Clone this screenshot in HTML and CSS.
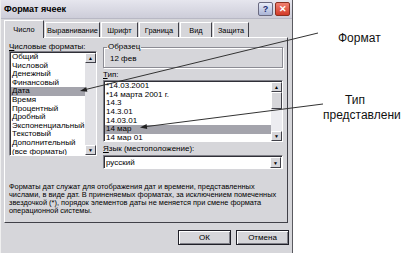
FILE: index.html
```html
<!DOCTYPE html>
<html lang="ru">
<head>
  <meta charset="UTF-8">
  <title>Формат ячеек</title>
  <link rel="stylesheet" href="styles.css">
</head>
<body>
  <div class="screen">
    <div class="dialog">
      <div class="titlebar">
        <span class="title">Формат ячеек</span>
        <span class="tbtn help">?</span>
        <span class="tbtn close">✕</span>
      </div>

      <div class="tabs">
        <div class="tab active" style="width:40px">Число</div>
        <div class="tab" style="width:55px">Выравнивание</div>
        <div class="tab" style="width:37px">Шрифт</div>
        <div class="tab" style="width:40px">Граница</div>
        <div class="tab" style="width:32px">Вид</div>
        <div class="tab" style="width:36px">Защита</div>
      </div>

      <div class="panel">
        <div class="panel-top">
          <!-- левая колонка -->
          <div class="col-left">
            <div class="label"><u>Ч</u>исловые форматы:</div>
            <div class="listbox formats">
              <div class="items">
                <div class="item">Общий</div>
                <div class="item">Числовой</div>
                <div class="item">Денежный</div>
                <div class="item">Финансовый</div>
                <div class="item selected">Дата</div>
                <div class="item">Время</div>
                <div class="item">Процентный</div>
                <div class="item">Дробный</div>
                <div class="item">Экспоненциальный</div>
                <div class="item">Текстовый</div>
                <div class="item">Дополнительный</div>
                <div class="item">(все форматы)</div>
              </div>
              <div class="scrollbar">
                <div class="sb-btn">▲</div>
                <div class="sb-track"><div class="sb-thumb full"></div></div>
                <div class="sb-btn">▼</div>
              </div>
            </div>
          </div>

          <!-- правая колонка -->
          <div class="col-right">
            <fieldset class="group">
              <legend>Образец</legend>
              <div class="sample">12 фев</div>
            </fieldset>
            <div class="label"><u>Т</u>ип:</div>
            <div class="listbox types">
              <div class="items">
                <div class="item">*14.03.2001</div>
                <div class="item">*14 марта 2001 г.</div>
                <div class="item">14.3</div>
                <div class="item">14.3.01</div>
                <div class="item">14.03.01</div>
                <div class="item selected">14 мар</div>
                <div class="item">14 мар 01</div>
              </div>
              <div class="scrollbar">
                <div class="sb-btn">▲</div>
                <div class="sb-track"><div class="sb-thumb"></div></div>
                <div class="sb-btn">▼</div>
              </div>
            </div>
            <div class="label lang"><u>Я</u>зык (местоположение):</div>
            <div class="combo">
              <span class="combo-text">русский</span>
              <span class="sb-btn combo-btn">▼</span>
            </div>
          </div>
        </div>

        <p class="desc">Форматы дат служат для отображения дат и времени, представленных<br>числами, в виде дат. В приненяемых форматах, за исключением помеченных<br>звездочкой (*), порядок элементов даты не меняется при смене формата<br>операционной системы.</p>
      </div>

      <div class="buttons">
        <button class="btn">ОК</button>
        <button class="btn">Отмена</button>
      </div>
    </div>

    <div class="notes">
      <div class="note note-format">Формат</div>
      <div class="note note-type">Тип</div>
      <div class="note note-view">представлени</div>
    </div>

    <!-- выноски со стрелками -->
    <svg class="callouts" width="408" height="253" viewBox="0 0 408 253">
      <line x1="318" y1="33" x2="86" y2="89.4" stroke="#333" stroke-width="1"/>
      <polygon points="80,91 87.4,91.8 86.2,86.9" fill="#222"/>
      <line x1="323" y1="104" x2="146" y2="126.6" stroke="#333" stroke-width="1"/>
      <polygon points="140,127.5 147.2,129.1 146.6,124.1" fill="#222"/>
    </svg>
  </div>
</body>
</html>
```

FILE: styles.css
```css
body {
  margin: 0;
  background: #fff;
  font-family: 'Liberation Sans', Arial, sans-serif;
  font-size: 8px;
  color: #000;
}
.screen {
  position: relative;
  display: flex;
  width: 408px;
  height: 253px;
  overflow: hidden;
}
.dialog {
  width: 293px;
  height: 253px;
  box-sizing: border-box;
  background: #d6d6da;
  border-left: 1px solid #f0f0f0;
  border-right: 1px solid #5a5a60;
  flex-shrink: 0;
}

/* заголовок окна */
.titlebar {
  height: 19px;
  display: flex;
  align-items: center;
  padding: 0 2px 0 3px;
  background: linear-gradient(to bottom, #e6e6ee, #cdcdd9);
  border-bottom: 1px solid #b8b8c4;
  box-sizing: border-box;
}
.title {
  font-weight: bold;
  font-size: 9px;
  flex: 1;
}
.tbtn {
  width: 13px;
  height: 12px;
  display: flex;
  justify-content: center;
  align-items: center;
  border: 1px solid #6a6a80;
  border-radius: 2px;
  font-weight: bold;
  font-size: 9px;
  margin-left: 2px;
}
.help {
  background: linear-gradient(to bottom, #e8ecf8, #aab4d6);
  color: #1c2a70;
}
.close {
  background: linear-gradient(to bottom, #f08070, #d23a28);
  color: #fff;
  border-color: #8a3020;
}

/* вкладки */
.tabs {
  display: flex;
  align-items: flex-end;
  height: 18px;
  padding-left: 3px;
  gap: 1px;
}
.tab {
  height: 15px;
  box-sizing: border-box;
  border-top: 1px solid #fff;
  border-left: 1px solid #fff;
  border-right: 1px solid #404048;
  display: flex;
  justify-content: center;
  align-items: center;
  white-space: nowrap;
  font-size: 7.4px;
}
.tab.active {
  height: 18px;
  margin-bottom: -1px;
  background: #d6d6da;
  position: relative;
  z-index: 1;
}

/* панель */
.panel {
  margin-left: 3px;
  width: 284px;
  height: 186px;
  box-sizing: border-box;
  border: 1px solid;
  border-color: #fff #404048 #404048 #fff;
  padding: 5px 4px 0 4px;
}
.panel-top {
  display: flex;
  gap: 6px;
}
.col-left {
  width: 88px;
}
.col-right {
  width: 180px;
}
.label {
  line-height: 8px;
  height: 8px;
  white-space: nowrap;
}
.listbox {
  display: flex;
  box-sizing: border-box;
  background: #fff;
  border: 1px solid;
  border-color: #808088 #fff #fff #808088;
  box-shadow: inset 1px 1px #303038;
  padding: 1px 0 0 1px;
  overflow: hidden;
}
.items {
  flex: 1;
  overflow: hidden;
}
.item {
  line-height: 8.6px;
  height: 8.6px;
  padding-left: 1px;
  white-space: nowrap;
}
.item.selected {
  background: #a4a4ac;
}
.formats {
  height: 105px;
}
.types {
  height: 62px;
  margin-top: 1px;
}
.types .item {
  line-height: 8.7px;
  height: 8.7px;
}

/* полосы прокрутки */
.scrollbar {
  width: 11px;
  display: flex;
  flex-direction: column;
  background: #ececf0;
}
.sb-btn {
  height: 10px;
  box-sizing: border-box;
  background: #d6d6da;
  border: 1px solid;
  border-color: #fff #404048 #404048 #fff;
  font-size: 5px;
  display: flex;
  justify-content: center;
  align-items: center;
}
.sb-track {
  flex: 1;
}
.sb-thumb {
  height: 17px;
  box-sizing: border-box;
  background: #d6d6da;
  border: 1px solid;
  border-color: #fff #404048 #404048 #fff;
}
.sb-thumb.full {
  height: 100%;
  background: #e2e2e6;
  border: none;
}

/* группа Образец */
.group {
  margin: 0;
  padding: 1px 6px 0 6px;
  height: 25px;
  box-sizing: border-box;
  border: 1px solid #8c8c94;
  box-shadow: 1px 1px #fff, inset 1px 1px #fff;
}
.group legend {
  padding: 0 1px;
  line-height: 8px;
  margin-left: -3px;
}
.sample {
  line-height: 9px;
  margin-top: 2px;
}
.col-right > .label {
  margin-top: 3px;
}
.combo {
  margin-top: 2px;
  height: 14px;
  box-sizing: border-box;
  display: flex;
  align-items: center;
  background: #fff;
  border: 1px solid;
  border-color: #808088 #fff #fff #808088;
  box-shadow: inset 1px 1px #303038;
  padding: 1px 1px 0 2px;
}
.combo-text {
  flex: 1;
}
.combo-btn {
  width: 11px;
  height: 11px;
}

.desc {
  margin: 14px 0 0 0;
  line-height: 8px;
  font-size: 7.4px;
  white-space: nowrap;
}

/* кнопки */
.buttons {
  display: flex;
  justify-content: flex-end;
  gap: 5px;
  padding: 7px 3px 0 0;
}
.btn {
  width: 53px;
  height: 15px;
  font-family: 'Liberation Sans', Arial, sans-serif;
  font-size: 8px;
  background: #d6d6da;
  border: 1px solid #202028;
  box-shadow: inset 1px 1px #fff, inset -1px -1px #808088;
  padding: 0;
  color: #000;
}

/* подписи справа */
.notes {
  display: flex;
  flex-direction: column;
  font-size: 12px;
  line-height: 14px;
  color: #111;
}
.note-format {
  margin: 31px 0 0 45px;
}
.note-type {
  margin: 48px 0 0 52px;
}
.note-view {
  margin: 1px 0 0 30px;
}
.callouts {
  position: absolute;
  left: 0;
  top: 0;
  pointer-events: none;
}
```
